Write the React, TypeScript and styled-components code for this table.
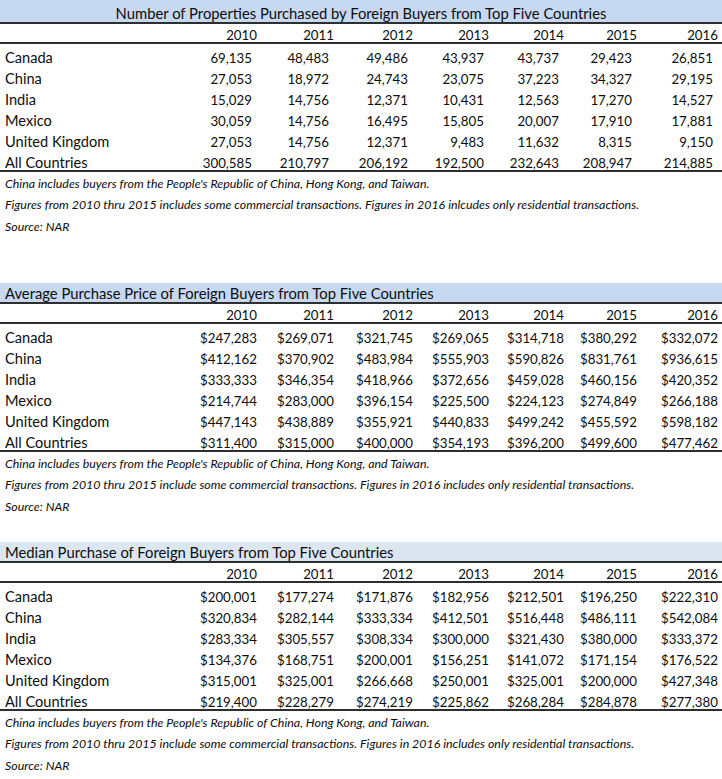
import React from "react";
import styled, { createGlobalStyle } from "styled-components";

// column grid shared by every row (label + 7 years)
const COLS = "184px 76px 77px 79px 76px 75px 73px 81px";
const YEARS = ["2010", "2011", "2012", "2013", "2014", "2015", "2016"];

interface ITable {
  title: string;
  tone: string;
  center?: boolean;
  tall?: boolean;
  gap: number;
  valuePad: number;
  rows: [string, string[]][];
  notes: string[];
}

const GlobalStyle = createGlobalStyle`
  *, *::before, *::after { box-sizing: border-box; }
  html, body {
    margin: 0;
    padding: 0;
    background: #fff;
  }
  body {
    font-family: Lato, "Liberation Sans", Arial, sans-serif;
    color: #0d0d0d;
  }
`;

const Sheet = styled.div`
  width: 722px;
  display: flex;
  flex-direction: column;
`;

const Block = styled.section<{ $gap: number }>`
  display: flex;
  flex-direction: column;
  margin-top: ${(p) => p.$gap}px;
`;

const TitleBar = styled.div<{ $tone: string; $center?: boolean; $tall?: boolean }>`
  height: ${(p) => (p.$tall ? 24 : 21)}px;
  background: ${(p) => p.$tone};
  border-bottom: 2px solid #2e2e2e;
  display: flex;
  align-items: flex-end;
  justify-content: ${(p) => (p.$center ? "center" : "flex-start")};
  padding: 0 0 1px ${(p) => (p.$center ? 0 : 5)}px;
  font-size: 14.8px;
  line-height: 15px;
  white-space: nowrap;
`;

const Row = styled.div<{ $head?: boolean; $rule?: boolean }>`
  display: grid;
  grid-template-columns: ${COLS};
  align-items: end;
  height: ${(p) => (p.$head ? 20 : p.$rule ? 23 : 21)}px;
  border-bottom: ${(p) => (p.$head || p.$rule ? "2px solid #2e2e2e" : "none")};
  font-size: 13.3px;
  line-height: 14px;
`;

const Label = styled.div`
  padding-left: 5px;
  white-space: nowrap;
  font-size: 14.6px;
  line-height: 15px;
`;

const Cell = styled.div<{ $pad: number }>`
  text-align: right;
  padding-right: ${(p) => p.$pad}px;
  white-space: nowrap;
`;

const Note = styled.div`
  height: 21.5px;
  display: flex;
  align-items: flex-end;
  padding: 0 0 4px 5px;
  font-style: italic;
  font-size: 12.4px;
  line-height: 13px;
  white-space: nowrap;
`;

const CHINA = "China includes buyers from the People's Republic of China, Hong Kong, and Taiwan.";
const SOURCE = "Source: NAR";

const tables: ITable[] = [
  {
    title: "Number of Properties Purchased by Foreign Buyers from Top Five Countries",
    tone: "#c6d9f1",
    center: true,
    tall: true,
    gap: 0,
    valuePad: 8,
    rows: [
      ["Canada", ["69,135", "48,483", "49,486", "43,937", "43,737", "29,423", "26,851"]],
      ["China", ["27,053", "18,972", "24,743", "23,075", "37,223", "34,327", "29,195"]],
      ["India", ["15,029", "14,756", "12,371", "10,431", "12,563", "17,270", "14,527"]],
      ["Mexico", ["30,059", "14,756", "16,495", "15,805", "20,007", "17,910", "17,881"]],
      ["United Kingdom", ["27,053", "14,756", "12,371", "9,483", "11,632", "8,315", "9,150"]],
      ["All Countries", ["300,585", "210,797", "206,192", "192,500", "232,643", "208,947", "214,885"]],
    ],
    notes: [
      CHINA,
      "Figures from 2010 thru 2015 includes some commercial transactions. Figures in 2016 inlcudes only residential transactions.",
      SOURCE,
    ],
  },
  {
    title: "Average Purchase Price of Foreign Buyers from Top Five Countries",
    tone: "#c6d9f1",
    gap: 46.5,
    valuePad: 3,
    rows: [
      ["Canada", ["$247,283", "$269,071", "$321,745", "$269,065", "$314,718", "$380,292", "$332,072"]],
      ["China", ["$412,162", "$370,902", "$483,984", "$555,903", "$590,826", "$831,761", "$936,615"]],
      ["India", ["$333,333", "$346,354", "$418,966", "$372,656", "$459,028", "$460,156", "$420,352"]],
      ["Mexico", ["$214,744", "$283,000", "$396,154", "$225,500", "$224,123", "$274,849", "$266,188"]],
      ["United Kingdom", ["$447,143", "$438,889", "$355,921", "$440,833", "$499,242", "$455,592", "$598,182"]],
      ["All Countries", ["$311,400", "$315,000", "$400,000", "$354,193", "$396,200", "$499,600", "$477,462"]],
    ],
    notes: [
      CHINA,
      "Figures from 2010 thru 2015 include some commercial transactions. Figures in 2016 includes only residential transactions.",
      SOURCE,
    ],
  },
  {
    title: "Median Purchase of Foreign Buyers from Top Five Countries",
    tone: "#dce6f1",
    gap: 25.5,
    valuePad: 3,
    rows: [
      ["Canada", ["$200,001", "$177,274", "$171,876", "$182,956", "$212,501", "$196,250", "$222,310"]],
      ["China", ["$320,834", "$282,144", "$333,334", "$412,501", "$516,448", "$486,111", "$542,084"]],
      ["India", ["$283,334", "$305,557", "$308,334", "$300,000", "$321,430", "$380,000", "$333,372"]],
      ["Mexico", ["$134,376", "$168,751", "$200,001", "$156,251", "$141,072", "$171,154", "$176,522"]],
      ["United Kingdom", ["$315,001", "$325,001", "$266,668", "$250,001", "$325,001", "$200,000", "$427,348"]],
      ["All Countries", ["$219,400", "$228,279", "$274,219", "$225,862", "$268,284", "$284,878", "$277,380"]],
    ],
    notes: [
      CHINA,
      "Figures from 2010 thru 2015 include some commercial transactions. Figures in 2016 includes only residential transactions.",
      SOURCE,
    ],
  },
];

const Table: React.FC<{ t: ITable }> = ({ t }) => (
  <Block $gap={t.gap}>
    <TitleBar $tone={t.tone} $center={t.center} $tall={t.tall}>
      {t.title}
    </TitleBar>
    <Row $head>
      <Label />
      {YEARS.map((y) => (
        <Cell key={y} $pad={3}>
          {y}
        </Cell>
      ))}
    </Row>
    {t.rows.map(([name, values], i) => (
      <Row key={name} $rule={i === t.rows.length - 1}>
        <Label>{name}</Label>
        {values.map((v, j) => (
          <Cell key={j} $pad={t.valuePad}>
            {v}
          </Cell>
        ))}
      </Row>
    ))}
    {t.notes.map((n) => (
      <Note key={n}>{n}</Note>
    ))}
  </Block>
);

const App: React.FC = () => (
  <>
    <GlobalStyle />
    <Sheet>
      {tables.map((t) => (
        <Table key={t.title} t={t} />
      ))}
    </Sheet>
  </>
);

export default App;
